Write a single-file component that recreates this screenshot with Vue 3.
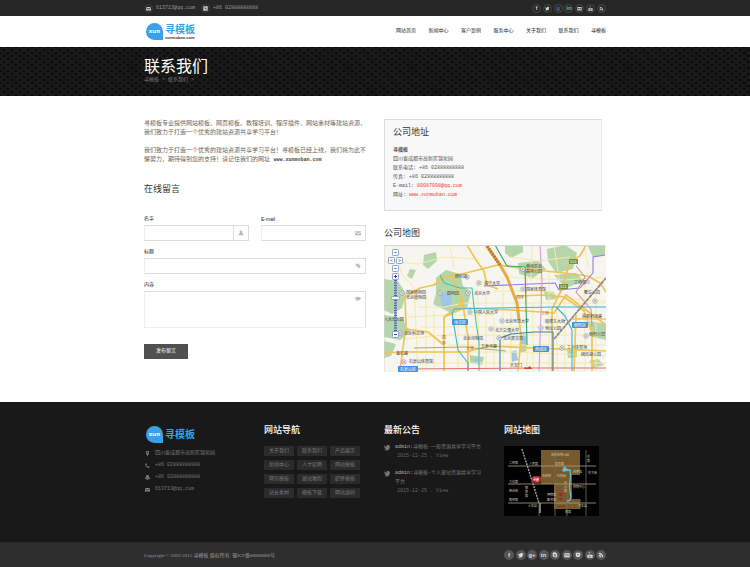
<script setup>
const bird = 'M15 4l-2 1a5 5 0 0 0-1-2l2-1-3 1a3 3 0 0 0-5 3C4 6 2 5 1 3c-1 2 0 3 1 4L1 6c0 2 1 3 3 4H2c1 1 2 2 3 2-1 1-3 2-5 1 7 4 14 0 13-7z'
const mail = 'M0 3h16v1L8 9 0 4zM0 6l8 5 8-5v8H0z'
const phone = 'M4 1l2 4-2 1c1 3 3 5 6 6l1-2 4 2c0 2-1 3-3 3C6 15 1 10 1 4c0-2 1-3 3-3z'
const phoneBox = 'M1 1h14v14H1zM5 4c-1 4 3 8 7 7V9l-2-1-1 1-2-2 1-1-1-2z'
const rss = 'M2 2c7 0 12 5 12 12h-3c0-5-4-9-9-9zM2 7c4 0 7 3 7 7H6c0-2-2-4-4-4zM2 12h2v2H2z'
const camera = 'M1 3h14v11H1zM4 6v4h3V6zM9 6v4h3V6z'
const tube = 'M4 0l2 3v3h1V3l2-3H8L6 2 5 0zM1 7h14v8H1zM6 9v4l5-2z'
const shield = 'M2 2h12v6c0 4-3 6-6 6s-6-2-6-6zM5 6l3 4 3-4z'
const skype = 'M4 1c6-1 11 3 10 9 1 3-1 5-4 4C4 15 1 11 2 6 1 4 2 2 4 1zM5 5v3h5v1H5v2h6V7H6V6h5V5z'
const printer = 'M4 1h8v5H4zM1 7h14v6h-3v-3H4v3H1zM5 11h6v4H5z'
const pin = 'M8 0c7 0 6 7 0 16C2 7 1 0 8 0zM8 3a2 2 0 1 0 0 5 2 2 0 0 0 0-5z'
const person = 'M8 1c5 0 4 5 2 7 3 1 5 2 5 6H1c0-4 2-5 5-6-2-2-3-7 2-7z'
const tag = 'M1 2h6l8 8-4 4-9-8zM4 4v1h1V4zM9 1l6 6-1 1-7-7z'
const bubble = 'M8 2c10 0 10 9 0 9l-5 4 1-5C-3 7 1 2 8 2z'

const topSocial = [
  { name: 'Facebook', glyph: 'f' }, { name: 'Twitter', path: bird },
  { name: 'Google', glyph: 'g', tone: 'blue' }, { name: 'LinkedIn', glyph: 'in', tone: 'warm' },
  { name: 'Flickr', path: camera }, { name: 'YouTube', path: tube }, { name: 'RSS', path: rss }
]
const bottomSocial = [
  { name: 'Facebook', glyph: 'f' }, { name: 'Twitter', path: bird },
  { name: 'Google', glyph: 'g+' }, { name: 'LinkedIn', glyph: 'in' },
  { name: 'Skype', path: skype }, { name: 'Flickr', path: camera },
  { name: 'Pocket', path: shield }, { name: 'YouTube', path: tube }, { name: 'RSS', path: rss }
]
const nav = ['网站首页', '新闻中心', '客户案例', '服务中心', '关于我们', '联系我们', '寻模板']
const links = ['关于我们', '联系我们', '产品展示', '新闻中心', '人才招聘', '网站模板', '网页模板', '建站教程', '织梦模板', '站长素材', '模板下载', '网站源码']
const contacts = [
  { icon: pin, text: '四川省成都市高新区锦化园' },
  { icon: phone, text: '+86 02888888888' },
  { icon: printer, text: '+86 02888888888' },
  { icon: mail, text: '613713@qq.com' }
]
const posts = [
  { text: '寻模板-一般资源共享学习平台', date: '2015-12-25 . View' },
  { text: '寻模板-个人建站资源共享学习平台', date: '2015-12-25 . View' }
]

const parks = [
  'M40 10l12-3 1 9-9 8-5-4z', 'M26 24l6 1-4 9-5-3z', 'M0 34l14 2 8 13-4 14-10 6-8-4z',
  'M0 70l18 3 8 14-10 8-16-3z', 'M0 96l12 3-5 12-7 2z', 'M52 33l10-8 14 4 3 12 8 6-4 16-18 4-16-8 3-10z',
  'M121 0h18v7l-12 6-6-5z', 'M134 18l20-2 8 8-13 9-14-4z', 'M163 4l18-4 12 8-4 16-17 4-8-12z',
  'M170 30l22-2 8 8-18 7z', 'M203 0h18v10l-12 2z', 'M205 76l17 3v16l-14-3z', 'M136 88l6 2 1 16-7 2z',
  'M160 46l10 1 3 7-11 1z', 'M183 104l10 1v7l-9 1z', 'M86 110l14 2-2 8-12-2z', 'M205 116l9-2 6 6-11 3z'
]
const minor = [
  'M0 16L34 19L60 12L96 14', 'M10 0L18 30L30 42L34 126', 'M34 62H60L80 58H222', 'M36 82H190', 'M20 94L60 90H222',
  'M42 50V126', 'M50 66V126', 'M74 72V126', 'M93 34L96 126', 'M102 50V126', 'M110 72V126', 'M119 34V126',
  'M127 64V126', 'M143 30V126', 'M149 58V126', 'M165 26V126', 'M173 64V126', 'M181 50V126', 'M201 34V126',
  'M212 48V126', 'M64 100H222', 'M22 107H128L222 111', 'M26 118H222', 'M122 32L180 35L222 32', 'M110 46H160L190 54L222 56',
  'M126 12L154 16L186 12', 'M148 0L147 36', 'M157 0V58', 'M170 0L176 40', 'M200 0L204 22', 'M24 72L64 70H110', 'M66 0L70 24', 'M98 0L120 24'
]
const major = [
  'M83 0L92 15L100 26L103 40L114 44', 'M21 52L36 43L50 40L58 33L86 27L114 20', 'M114 20L142 24L180 28L204 31L216 38L222 47',
  'M21 52L22 80L16 126', 'M66 28L78 54L76 60L60 72V126', 'M78 54L84 92V126', 'M60 72L80 63L128 65L170 68L182 50L222 80',
  'M133 51L160 50L180 52L200 66L208 88V126', 'M202 0L196 11L186 16L178 44L168 64V126', 'M192 70L190 126', 'M0 108L20 107H82L106 101L222 106',
  'M135 72L137 92L134 126', 'M22 84L44 87L60 100', 'M188 74H222'
]
const metro = [
  { d: 'M56 30L60 38L76 43L88 43L90 62L95 98V126', c: '#4cbfae' },
  { d: 'M111 0L123 21L141 22L143 100', c: '#35a56a' },
  { d: 'M100 41L171 38L175 45L196 43L209 28V12L221 10', c: '#9a7bea' },
  { d: 'M156 0L158 36L155 126', c: '#dc9fd3' },
  { d: 'M222 62H172L181 71L188 85V126', c: '#35b4dc' },
  { d: 'M172 62L112 63L71 64L68 68L74 105L84 118V126', c: '#35b4dc' },
  { d: 'M169 126V87H150L127 89L116 93V126', c: '#397fa9' },
  { d: 'M16 124L150 123L222 123', c: '#dc7474' },
  { d: 'M192 21L201 32L192 47L207 64L208 82', c: '#c99797' }
]
const places = [
  [71, 33, '颐和园'], [100, 40, '清华大学'], [63, 50, '圆明园'], [90, 50, '北京大学'],
  [22, 49, '国家植物园'], [22, 54, '北京植物园'], [90, 69, '中国人民大学'], [0, 76, '八大处公园'],
  [20, 90, '北京射击场'], [79, 95, '北京动物园'], [97, 103, '万寿寺路'], [25, 118, '石景山体育馆'],
  [142, 23, '奥林匹克'], [142, 28, '森林公园'], [142, 46, '国家体育馆'], [121, 78, '北京师范大学'],
  [111, 87, '北方交通大学'], [119, 95, '北京展览馆'], [161, 78, '鼓楼东大街'], [161, 85, '地坛公园'],
  [190, 39, '工商银行'], [200, 49, '蟹岛公园'], [198, 73, '首都机场路'], [183, 104, '工人体育场'],
  [205, 91, '朝阳公园'], [197, 111, '团结湖公园'], [126, 122, '天安门'], [12, 110, '莲石路']
]
const markers = [[83, 32], [95, 38], [56, 48], [84, 48], [18, 48], [86, 67], [16, 88], [107, 84], [20, 117], [139, 24], [139, 44], [118, 76], [115, 93], [157, 83], [178, 103], [211, 56], [202, 91]]
const districts = [[68, 74, '海淀区'], [14, 121, '石景山区'], [149, 101, '西城区'], [188, 77, '朝阳区']]
</script>

<template>
  <div class="page">
    <div class="topbar">
      <div class="wrap bar">
        <div class="reach">
          <span class="ring"><svg viewBox="0 0 16 16"><path :d="mail" /></svg></span>
          <span>613713@qq.com</span>
          <span class="ring second"><svg viewBox="0 0 16 16"><path fill-rule="evenodd" :d="phoneBox" /></svg></span>
          <span>+86 02888888888</span>
        </div>
        <div class="social top">
          <a v-for="s in topSocial" :key="s.name" href="#" :aria-label="s.name" :class="s.tone">
            <span v-if="s.glyph">{{ s.glyph }}</span>
            <svg v-else viewBox="0 0 16 16"><path fill-rule="evenodd" :d="s.path" /></svg>
          </a>
        </div>
      </div>
    </div>

    <header class="header">
      <div class="wrap bar">
        <a href="#" class="logo">
          <span class="badge">xun</span>
          <span class="brand"><b>寻模板</b><small>xunmoban.com</small></span>
        </a>
        <nav class="nav"><a v-for="n in nav" :key="n" href="#">{{ n }}</a></nav>
      </div>
    </header>

    <section class="banner">
      <div class="wrap">
        <h1>联系我们</h1>
        <p>寻模板 &gt; 联系我们 &gt;</p>
      </div>
    </section>

    <main class="wrap main">
      <section>
        <p class="intro">寻模板专业提供网站模板、网页模板、教程培训、程序插件、网站素材等建站资源，我们致力于打造一个优秀的建站资源共享学习平台！</p>
        <p class="intro">我们致力于打造一个优秀的建站资源共享学习平台！寻模板已经上线，我们将为此不懈努力，期待得到您的支持！请记住我们的网址 <b>www.xunmoban.com</b></p>
        <h2 class="form-title">在线留言</h2>
        <form @submit.prevent>
          <div class="pair">
            <div class="field">
              <label for="name">名字</label>
              <div class="box"><input id="name" type="text"><span class="addon split"><svg viewBox="0 0 16 16"><path :d="person" /></svg></span></div>
            </div>
            <div class="field">
              <label for="email" class="latin">E-mail</label>
              <div class="box"><input id="email" type="email"><span class="addon"><svg viewBox="0 0 16 16"><path :d="mail" /></svg></span></div>
            </div>
          </div>
          <div class="field">
            <label for="subject">标题</label>
            <div class="box"><input id="subject" type="text"><span class="addon"><svg viewBox="0 0 16 16"><path fill-rule="evenodd" :d="tag" /></svg></span></div>
          </div>
          <div class="field">
            <label for="message">内容</label>
            <div class="box tall"><textarea id="message"></textarea><span class="addon"><svg viewBox="0 0 16 16"><path :d="bubble" /></svg></span></div>
          </div>
          <button type="submit" class="send">发布留言</button>
        </form>
      </section>

      <section>
        <div class="address">
          <h2>公司地址</h2>
          <address>
            <strong>寻模板</strong><br>四川省成都市高新区锦化园<br>联系电话: +86 02888888888<br>传真: +86 02888888888<br>
            E-mail: <a href="#">80087098@qq.com</a><br>网址: <a href="#">www.xunmoban.com</a>
          </address>
        </div>
        <h2 class="map-title">公司地图</h2>
        <svg class="map" viewBox="0 0 222 127">
          <rect width="222" height="127" fill="#f6f5f0" />
          <path v-for="p in parks" :key="p" :d="p" fill="#b5d5aa" />
          <path d="M56 50l7-3 5 6-2 9-8-1zM138 91l5 2-1 9-5-1zM127 107l5-2 2 10-6 2zM90 113l8 1-1 4-8-1z" fill="#a0c5e8" />
          <path v-for="p in minor" :key="p" :d="p" fill="none" stroke="#f6eaa5" stroke-width="1" />
          <g fill="none" stroke-linejoin="round">
            <path v-for="p in major" :key="p" :d="p" stroke="#f3c353" stroke-width="1.7" />
            <path d="M103 1L116 20L123 32L133 58L135 75" stroke="#eda943" stroke-width="3" />
            <path d="M103 1L116 20" stroke="#b57732" stroke-width="3" stroke-dasharray="2 1" />
            <path v-for="m in metro" :key="m.d" :d="m.d" :stroke="m.c" stroke-width="1.1" />
            <path d="M170 94L222 33" stroke="#938184" stroke-width="1.7" stroke-dasharray="4 .5" />
            <path d="M30 103L80 102L122 106" stroke="#9b925f" stroke-width=".8" />
          </g>
          <g class="markers"><circle v-for="(m, i) in markers" :key="i" :cx="m[0]" :cy="m[1]" r="2.2" /></g>
          <g class="dots"><circle v-for="(m, i) in markers" :key="i" :cx="m[0]" :cy="m[1]" r=".8" /></g>
          <g class="places"><text v-for="p in places" :key="p[2]" :x="p[0]" :y="p[1]">{{ p[2] }}</text></g>
          <g class="places ringroad"><text x="132" y="54">四环</text><text x="157" y="70">三环</text><text x="58" y="94">四</text><text x="58" y="100">环</text><text x="82" y="105">三环</text></g>
          <g v-for="d in districts" :key="d[2]" class="district">
            <rect :x="d[0]" :y="d[1]" :width="d[2].length * 4 + 4" height="6" rx="1" />
            <text :x="d[0] + 2" :y="d[1] + 5">{{ d[2] }}</text>
          </g>
          <g class="shield"><rect x="185" y="14" width="9" height="5" /><rect x="175" y="39" width="9" height="5" /><text x="186" y="18">S11</text><text x="176" y="43">S11</text></g>
          <path d="M140 124l1-2 2 1 3-2 2 3z" fill="#dd3f2f" />
          <g class="control">
            <path d="M11.500 31V92" stroke="#91a6d6" stroke-width="2" /><path d="M11.500 35V87" stroke="#4964b3" stroke-width="3" stroke-dasharray="1 1.500" />
            <rect x="8.500" y="4.500" width="6" height="6" rx=".8" /><rect x="4.500" y="12.500" width="6" height="6" rx=".8" /><rect x="12.500" y="12.500" width="6" height="6" rx=".8" /><rect x="8.500" y="20.500" width="6" height="6" rx=".8" /><rect x="8.500" y="28.500" width="6" height="6" rx=".8" /><rect x="7.500" y="51.500" width="8" height="3" rx=".8" /><rect x="8.500" y="86.500" width="6" height="6" rx=".8" />
            <path d="M10.500 8l1-1 1 1M8 14.500l-1 1 1 1M15 14.500l1 1-1 1M10.500 23l1 1 1-1M10 31.500h3M11.500 30v3M10 89.500h3" stroke="#2848a8" stroke-width="1" fill="none" />
          </g>
          <path d="M0 127V.5H222" fill="none" stroke="#d5d5d5" />
        </svg>
      </section>
    </main>

    <footer class="footer">
      <div class="wrap columns">
        <section>
          <a href="#" class="logo"><span class="badge">xun</span><span class="brand"><b>寻模板</b></span></a>
          <ul class="contacts">
            <li v-for="(c, i) in contacts" :key="i"><svg viewBox="0 0 16 16"><path fill-rule="evenodd" :d="c.icon" /></svg>{{ c.text }}</li>
          </ul>
        </section>
        <section>
          <h3>网站导航</h3>
          <div class="links"><a v-for="l in links" :key="l" href="#">{{ l }}</a></div>
        </section>
        <section>
          <h3>最新公告</h3>
          <div class="posts">
            <div v-for="p in posts" :key="p.text" class="post">
              <svg viewBox="0 0 16 16"><path :d="bird" /></svg>
              <p><a href="#">admin:</a>{{ p.text }}<small>{{ p.date }}</small></p>
            </div>
          </div>
        </section>
        <section>
          <h3>网站地图</h3>
          <svg class="sitemap" viewBox="0 0 95 70">
            <rect width="95" height="70" fill="#020202" />
            <path d="M37 4H76V29H68V53H76V63H50V38H37z" fill="#765a2b" />
            <g stroke="#aaa08c" stroke-width=".8" fill="none"><path d="M4 20H92M4 38H92M4 57H92" /><path d="M51 4V70M63 38V70M82 4V70M35 57V70M76 53V63" stroke="#746d60" /><path d="M36 57V67" stroke-width="1.500" /></g>
            <path d="M18 3L35 57" stroke="#aaa" stroke-width="1.300" stroke-dasharray="2 1" />
            <path d="M63 55c5 0 4-5 3-10-2-7 2-11 0-21l-7 1" stroke="#66bbd0" stroke-width="1.300" fill="none" />
            <path d="M58 25l2-5 6 5z" fill="#66bbd0" />
            <rect x="28" y="30" width="9" height="7" rx="2" fill="#a62328" />
            <g class="tiny">
              <text x="47" y="10">城市体育公园</text><text x="5" y="18">二环路</text><text x="25" y="19">人民路</text><text x="51" y="19">建设路</text><text x="84" y="28">东大街</text><text x="38" y="31">市政府</text><text x="53" y="31">科技园</text><text x="69" y="27">体育馆</text><text x="5" y="37">文化路</text><text x="5" y="46">商业街</text><text x="5" y="55">南环路</text><text x="69" y="42">购物中心</text><text x="43" y="50">博物馆</text><text x="43" y="55">图书馆</text><text x="24" y="61">火车站</text><text x="74" y="61">汽车站</text><text x="21" y="43">解</text><text x="21" y="47">放</text><text x="21" y="51">路</text><text x="60" y="38">中</text><text x="60" y="42">心</text><text x="60" y="46">路</text><text x="61" y="67">南路</text><text x="83" y="12">东</text><text x="83" y="16">路</text><text x="29" y="35" class="here">寻模</text>
            </g>
            <path d="M55 47h3v3h-3zM55 52h3v2h-3zM53 60h8v1h-8z" fill="#a62328" />
          </svg>
        </section>
      </div>
    </footer>

    <div class="bottom">
      <div class="wrap bar">
        <p>Copyright © 2003-2015 寻模板 版权所有&nbsp; 蜀ICP备88888888号</p>
        <div class="social low">
          <a v-for="s in bottomSocial" :key="s.name" href="#" :aria-label="s.name">
            <span v-if="s.glyph">{{ s.glyph }}</span>
            <svg v-else viewBox="0 0 16 16"><path fill-rule="evenodd" :d="s.path" /></svg>
          </a>
        </div>
      </div>
    </div>
  </div>
</template>

<style>
body { margin: 0; background: #2e2e2e; }
</style>

<style scoped>
.page { background: #fff; color: #666; font: 5px/9px "Liberation Mono", "Noto Sans CJK SC", monospace; }
.page * { box-sizing: border-box; }
a { color: inherit; text-decoration: none; }
h1, h2, h3, p, ul { margin: 0; padding: 0; font-weight: 400; }
svg { display: block; }
.wrap { max-width: 462px; margin: 0 auto; }
.bar { display: flex; align-items: center; justify-content: space-between; height: 100%; }

.topbar { height: 16px; background: #262626; color: #999; }
.reach { display: flex; align-items: center; gap: 3px; }
.ring { display: grid; place-items: center; width: 9px; height: 9px; border: 1px solid #3c3c3c; border-radius: 50%; }
.ring svg { width: 5px; fill: #ccc; }
.second { margin-left: 3px; }
.social { display: flex; justify-content: space-between; }
.social a { display: grid; place-items: center; border-radius: 50%; color: #ccc; font: bold 6px/6px "Liberation Sans", sans-serif; }
.social svg { width: 5px; height: 5px; fill: currentColor; }
.top { width: 74px; }
.top a { width: 9px; height: 9px; border: 1px solid #484848; }
.top .blue { color: #536d94; }
.top .warm { color: #b39b82; }
.low { width: 102px; }
.low a { width: 10px; height: 10px; background: #555; color: #ddd; }
.low svg { width: 6px; height: 6px; }

.header { height: 31px; }
.logo { display: flex; align-items: center; gap: 2px; padding-left: 2px; }
.badge { width: 17px; height: 17px; border-radius: 50% 50% 0 50%; background: #39a1e8; color: #fff; font: bold 6px/16px "Open Sans", sans-serif; text-align: center; }
.brand { display: grid; color: #39a1e8; }
.brand b { font: bold 10px/11px "Liberation Sans", "Noto Sans CJK SC", sans-serif; }
.brand small { color: #333; font: bold 4px/5px "Liberation Sans", sans-serif; }
.nav { display: flex; justify-content: space-between; width: 210px; color: #222; }

.banner { padding-top: 8px; height: 49px; background-color: #171717; background-image: radial-gradient(#0b0b0b 1px, transparent 2px), radial-gradient(#0b0b0b 1px, transparent 2px), repeating-linear-gradient(45deg, #1c1c1c 0 1px, #151515 1px 2px); background-size: 8px 6px, 8px 6px, auto; background-position: 0 0, 4px 3px, 0 0; }
h1 { color: #fff; font: 400 16px/21px "Noto Sans CJK SC", sans-serif; }
.banner p { color: #777; }

.main { display: grid; grid-template-columns: 1fr 1fr; gap: 18px; padding: 23px 0 30px; }
.intro { margin-bottom: 9px; font-size: 6px; line-height: 9px; }
.intro b { font-size: 5px; color: #444; }
h2, h3 { color: #333; font: 400 9px/12px "Noto Sans CJK SC", sans-serif; }
.form-title { padding-top: 9px; margin-bottom: 20px; }
.pair { display: grid; grid-template-columns: 1fr 1fr; gap: 12px; }
.field { margin-bottom: 7px; }
label { display: block; margin-bottom: 1px; color: #222; line-height: 9px; }
.latin { font-family: "Liberation Sans", sans-serif; font-size: 5px; color: #224; }
.box { display: flex; height: 16px; border: 1px solid #ddd; border-left-color: #eee; background: #fff; }
.box input, .box textarea { flex: 1; min-width: 0; padding: 2px; border: 0; outline: 0; background: none; font: inherit; resize: none; }
.tall { height: 37px; border-bottom-color: #eee; }
.addon { display: grid; place-items: center; width: 15px; height: 14px; }
.addon svg { width: 6px; height: 6px; fill: #bbb; }
.split { border-left: 1px solid #ddd; }
.send { display: block; margin-top: 16px; width: 44px; height: 15px; padding: 0; border: 0; background: #505050; color: #fff; font: inherit; }

.address { margin-right: 4px; padding: 6px 8px 10px; border: 1px solid #ddd; border-right-color: #eee; background: #f8f8f8; }
.address h2 { margin-bottom: 8px; }
address { font-style: normal; line-height: 9px; color: #555; }
address a { color: #f33; }
.map-title { margin: 16px 0 6px; }
.map { width: 100%; }
.map text { font: 4px "Noto Sans CJK SC", sans-serif; }
.places { fill: #444; }
.ringroad { fill: #985c13; }
.markers { fill: #fff; stroke: #667; stroke-width: 0.5px; }
.dots { fill: #667; }
.district rect { fill: #4292dd; }
.district text { fill: #fff; }
.shield rect { fill: #6d963e; }
.shield text { fill: #fff; }
.control rect { fill: #fff; stroke: #8fa1cc; stroke-width: 1px; }

.footer { padding: 22px 0 26px; background: #191919; color: #777; }
.columns { display: grid; grid-template-columns: repeat(4, 1fr); gap: 18px; }
.footer .logo { height: 20px; }
.contacts { display: grid; gap: 3px; padding-top: 5px; list-style: none; }
.contacts li { display: flex; align-items: center; gap: 5px; }
.contacts svg { width: 5px; height: 5px; margin-left: 1px; fill: #888; }
h3 { margin-bottom: 10px; color: #fff; line-height: 12px; font-weight: 500; }
.links { display: grid; grid-template-columns: repeat(3, 30px); gap: 4px 3px; }
.links a { height: 10px; background: #2b2b2b; line-height: 10px; text-align: center; }
.posts { display: grid; gap: 8px; margin-top: -3px; }
.post { display: flex; gap: 4px; }
.post svg { flex: none; width: 7px; height: 7px; margin-top: 1px; fill: #777; }
.post a { color: #aaa; }
.post small { display: block; padding-left: 2px; font-size: 5px; color: #666; }
.sitemap { width: 95px; }
.tiny { fill: #ccc3ad; }
.tiny text { font: 3px "Noto Sans CJK SC", sans-serif; }
.tiny .here { fill: #fff; font-weight: 700; }

.bottom { height: 25px; background: #2e2e2e; border-top: 1px solid #282828; color: #999; }
.bottom p { font-family: "Liberation Serif", "Noto Sans CJK SC", serif; }
</style>
